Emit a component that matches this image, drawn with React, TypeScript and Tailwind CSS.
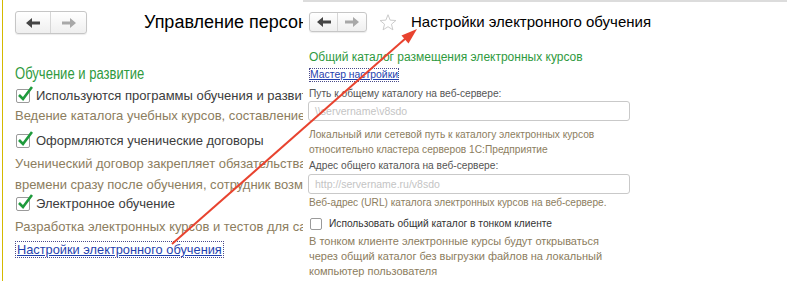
import React from 'react';

const font = { fontFamily: '"Liberation Sans", Arial, sans-serif' };

const NavButtons = ({ small }: { small?: boolean }) => {
  const h = small ? 'h-[20px]' : 'h-[23px]';
  const w = small ? 'w-[28px]' : 'w-[35px]';
  return (
    <div className={`flex ${h} rounded-[3px] border border-[#c6c6c6] bg-gradient-to-b from-white to-[#efefef] shadow-[0_1px_1px_rgba(0,0,0,0.08)]`}>
      <div className={`${w} flex items-center justify-center border-r border-[#d6d6d6]`}>
        <svg width="14" height="10" viewBox="0 0 14 10">
          <path d="M0 5 L6 0 L6 3.5 L14 3.5 L14 6.5 L6 6.5 L6 10 Z" fill="#454545" />
        </svg>
      </div>
      <div className={`${w} flex items-center justify-center`}>
        <svg width="14" height="10" viewBox="0 0 14 10">
          <path d="M14 5 L8 0 L8 3.5 L0 3.5 L0 6.5 L8 6.5 L8 10 Z" fill="#a8a8a8" />
        </svg>
      </div>
    </div>
  );
};

const CheckedBox = () => (
  <div className="relative w-[14px] h-[14px] shrink-0 rounded-[2px] border border-[#9a9a9a] bg-white">
    <svg className="absolute left-[0px] top-[-4px]" width="16" height="16" viewBox="0 0 16 16">
      <path d="M2 9 L6 13 L15 1" stroke="#1e9a3c" strokeWidth="2.6" fill="none" />
    </svg>
  </div>
);

const CheckRow = ({ label, className }: { label: string; className?: string }) => (
  <div className={`flex items-center gap-[6px] pl-[1px] h-[18px] ${className ?? ''}`}>
    <CheckedBox />
    <span className="text-[13px] leading-[18px] text-[#3c3c3c]">{label}</span>
  </div>
);

const Note = ({ children, className }: { children: React.ReactNode; className?: string }) => (
  <div className={`text-[13px] leading-[21px] text-[#8c7d5e] ${className ?? ''}`}>{children}</div>
);

const LeftPanel = () => (
  <div className="w-[303px] shrink-0 overflow-hidden whitespace-nowrap">
    <div className="ml-[2px] h-[281px] border-l-[1px] border-[#d4b900] pl-[12px]">
      <div className="flex items-center pt-[11px]">
        <NavButtons />
        <span className="ml-[57px] text-[18px] text-black leading-[23px]">Управление персоналом</span>
      </div>
      <div className="mt-[30px] h-[20px] text-[16px] leading-[20px] text-[#2f9a3e]">
        <span className="inline-block origin-left scale-x-[0.815]">Обучение и развитие</span>
      </div>
      <CheckRow label="Используются программы обучения и развития" className="mt-[3px]" />
      <Note>Ведение каталога учебных курсов, составление планов</Note>
      <CheckRow label="Оформляются ученические договоры" className="mt-[6px]" />
      <Note className="mt-[3px]">
        Ученический договор закрепляет обязательства сотрудника
        <br />
        времени сразу после обучения, сотрудник возмещает
      </Note>
      <CheckRow label="Электронное обучение" />
      <Note className="mt-[3px]">Разработка электронных курсов и тестов для самостоятельного</Note>
      <div className="mt-[4px] w-fit border border-dotted border-[#4a4a8a] px-[1px] text-[12.8px] leading-[15px] text-[#1f3fae] underline">
        Настройки электронного обучения
      </div>
    </div>
  </div>
);

const Input = ({ placeholder }: { placeholder: string }) => (
  <div className="ml-[-1px] w-[322px] h-[20px] rounded-[3px] border border-[#c9c9c9] bg-white pl-[6px] text-[10.5px] leading-[18px] text-[#c4c4c4]">
    {placeholder}
  </div>
);

const RightPanel = () => (
  <div className="w-[484px] shrink-0 border-t-[2px] border-[#dcdcdc] pl-[6px] whitespace-nowrap">
    <div className="flex items-center pt-[9px] h-[31px]">
      <NavButtons small />
      <svg className="ml-[12px]" width="18" height="17" viewBox="0 0 24 23">
        <path
          d="M12 1 L14.9 8.3 L22.7 8.8 L16.7 13.8 L18.6 21.4 L12 17.2 L5.4 21.4 L7.3 13.8 L1.3 8.8 L9.1 8.3 Z"
          fill="none"
          stroke="#c9c9c9"
          strokeWidth="1.3"
        />
      </svg>
      <span className="ml-[14px] text-[15px] leading-[20px] text-black">Настройки электронного обучения</span>
    </div>
    <div className="mt-[17px] text-[12px] leading-[14px] text-[#2f9a3e]">Общий каталог размещения электронных курсов</div>
    <div className="mt-[4px] w-fit border border-dotted border-[#4a4a8a] text-[10.4px] leading-[12px] text-[#1f3fae] underline">
      Мастер настройки
    </div>
    <div className="mt-[5px] text-[10.2px] leading-[13px] text-[#555]">Путь к общему каталогу на веб-сервере:</div>
    <div className="mt-[1px]">
      <Input placeholder="\\servername\v8sdo" />
    </div>
    <div className="mt-[6px] text-[10.2px] leading-[15px] text-[#8c7d5e]">
      Локальный или сетевой путь к каталогу электронных курсов
      <br />
      относительно кластера серверов 1С:Предприятие
    </div>
    <div className="mt-[2px] text-[10.2px] leading-[13px] text-[#555]">Адрес общего каталога на веб-сервере:</div>
    <div className="mt-[2px]">
      <Input placeholder="http://servername.ru/v8sdo" />
    </div>
    <div className="mt-[1px] text-[10.1px] leading-[15px] text-[#8c7d5e]">
      Веб-адрес (URL) каталога электронных курсов на веб-сервере.
    </div>
    <div className="mt-[6px] h-[15px] flex items-center gap-[7px] pl-[1px]">
      <div className="w-[12px] h-[12px] rounded-[2px] border border-[#9a9a9a] bg-white" />
      <span className="text-[10.2px] leading-[15px] text-[#333]">Использовать общий каталог в тонком клиенте</span>
    </div>
    <div className="mt-[3px] text-[11px] leading-[15px] text-[#8c7d5e]">
      В тонком клиенте электронные курсы будут открываться
      <br />
      через общий каталог без выгрузки файлов на локальный
      <br />
      компьютер пользователя
    </div>
  </div>
);

export default function App() {
  return (
    <div className="relative w-[789px] h-[283px] overflow-hidden bg-white" style={font}>
      <div className="flex">
        <LeftPanel />
        <RightPanel />
      </div>
      <svg className="absolute left-0 top-0 pointer-events-none" width="789" height="283">
        <line x1="172" y1="244" x2="406" y2="38" stroke="#e8432f" strokeWidth="2" />
        <path d="M417 29 L408.5 43.5 L401.5 35.5 Z" fill="#e8432f" />
      </svg>
    </div>
  );
}
